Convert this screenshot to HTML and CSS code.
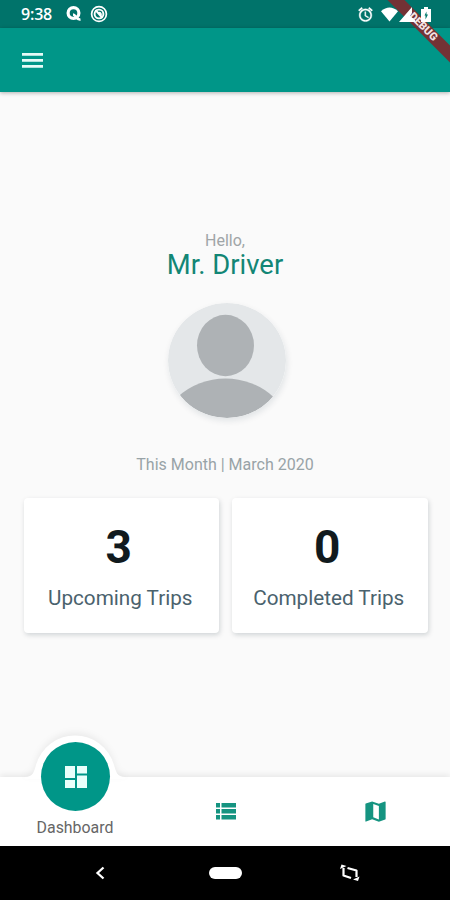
FILE: index.html
```html
<!DOCTYPE html>
<html lang="en">
<head>
<meta charset="UTF-8">
<meta name="viewport" content="width=device-width, initial-scale=1.0">
<title>Driver Dashboard</title>
<link rel="stylesheet" href="styles.css">
</head>
<body>

<div class="phone">
    <div class="status-bar">
        <span class="time">9:38</span>
        <svg class="q-icon" width="18" height="18" viewBox="0 0 18 18" fill="none" stroke="#fff">
            <circle cx="8.500" cy="8" r="5.400" stroke-width="3.200"/>
            <path d="M8 9.500c3 0 3 5.700 7.500 5" stroke-width="2.600"/>
        </svg>
        <svg class="chat-icon" width="18" height="18" viewBox="0 0 18 18" fill="none" stroke="#fff">
            <circle cx="9" cy="9" r="7.400" stroke-width="1.700"/>
            <circle cx="9" cy="9" r="4.400" stroke-width="1.900"/>
            <path d="M5.500 5l7 8M8 8.200c2-1 3 0 3 2" stroke-width="1.900"/>
        </svg>
        <div class="status-right">
            <svg width="17" height="17" viewBox="0 0 24 24" fill="#fff" stroke="#fff" stroke-width=".5">
                <path d="M22 5.720l-4.600-3.860-1.290 1.530 4.600 3.860L22 5.720zM7.880 3.390L6.600 1.860 2 5.710l1.290 1.530 4.590-3.850zM12.500 8H11v6l4.750 2.850.75-1.230-4-2.370V8zM12 4c-4.970 0-9 4.030-9 9s4.020 9 9 9c4.970 0 9-4.030 9-9s-4.030-9-9-9zm0 16c-3.870 0-7-3.130-7-7s3.130-7 7-7 7 3.130 7 7-3.130 7-7 7z"/>
            </svg>
            <svg width="17" height="15" viewBox="0 0 18 15" fill="#fff">
                <path d="M0 4Q9-4 18 4L9 15z"/>
            </svg>
            <svg width="16" height="15" viewBox="0 0 16 15" fill="#fff">
                <path d="M0 15L13 0v6l-2 3 5 4v2z"/>
            </svg>
            <svg width="10" height="15" viewBox="0 0 10 15">
                <path d="M3 0h4v2h3v13H0V2h3z" fill="#fff"/>
                <path d="M5.500 4.500L3.500 8.500h1v4l2.500-5H5.500z" fill="#00796b"/>
            </svg>
        </div>
    </div>

    <header class="app-bar">
        <svg width="21" height="15" viewBox="0 0 21 15" fill="#e6fbf7">
            <path d="M0 0h21v2.700H0zM0 6h21v2.700H0zM0 12h21v2.700H0z"/>
        </svg>
    </header>

    <div class="debug"><span>DEBUG</span></div>

    <main>
        <p class="hello">Hello,</p>
        <h1>Mr. Driver</h1>
        <svg class="avatar" width="118" height="115" viewBox="0 0 118 115">
            <clipPath id="round"><ellipse cx="59" cy="57.500" rx="59" ry="57.500"/></clipPath>
            <g clip-path="url(#round)">
                <rect width="118" height="115" fill="#e4e7e9"/>
                <ellipse cx="57.500" cy="42.500" rx="28.500" ry="30.700" fill="#aeb2b5"/>
                <ellipse cx="57.500" cy="137" rx="67" ry="61.500" fill="#aeb2b5"/>
            </g>
        </svg>
        <p class="month">This Month | March 2020</p>
        <div class="cards">
            <div class="card">
                <div class="count">3</div>
                <div class="label">Upcoming Trips</div>
            </div>
            <div class="card">
                <div class="count">0</div>
                <div class="label">Completed Trips</div>
            </div>
        </div>
    </main>

    <nav class="tabs">
        <div class="tab active">
            <svg class="bump" width="100" height="44" viewBox="0 0 100 44">
                <path d="M0 44V42C8 42 9 37 11 30A40.500 40.500 0 0 1 89 30C91 37 92 42 100 42V44z" fill="#fff"/>
            </svg>
            <div class="circle">
                <svg width="22" height="22" viewBox="0 0 22 22" fill="#e9fffb">
                    <path d="M0 0h10v12H0zM12 0h10v7.500H12zM0 14h10v8H0zM12 9.500h10V22H12z"/>
                </svg>
            </div>
            <span>Dashboard</span>
        </div>
        <div class="tab">
            <svg class="list-icon" width="20" height="17" viewBox="0 0 20 17" fill="#159481">
                <path d="M0 0h4v4.500H0zM5.500 0H20v4.500H5.500zM0 6h4v4.500H0zM5.500 6H20v4.500H5.500zM0 12h4v4.500H0zM5.500 12H20v4.500H5.500z"/>
            </svg>
        </div>
        <div class="tab">
            <svg class="map-icon" width="27" height="27" viewBox="0 0 24 24" fill="#159481">
                <path d="M20.500 3l-.16.030L15 5.100 9 3 3.360 4.900c-.21.070-.36.250-.36.480V20.500c0 .28.220.5.5.5l.16-.030L9 18.900l6 2.100 5.640-1.900c.21-.070.36-.25.360-.480V3.500c0-.28-.22-.5-.5-.5zM15 19l-5-1.800V5.300l5 1.800V19z"/>
            </svg>
        </div>
    </nav>

    <div class="system-nav">
        <svg width="10" height="14" viewBox="0 0 10 14" fill="none" stroke="#fff" stroke-width="2.300">
            <path d="M8.500 1.500L2.500 7l6 5.500"/>
        </svg>
        <div class="home"></div>
        <svg class="rotate-icon" width="20" height="18" viewBox="0 0 20 18" fill="none" stroke="#fff" stroke-width="2.200" stroke-linejoin="round">
            <path d="M3.500 4v7.500L11 14M7.500 4l9 2.500V13"/>
            <path d="M0 5l1.500-4.500L6.500 2zM19.500 12.500L18 17l-5-1.500z" fill="#fff" stroke="none"/>
        </svg>
    </div>
</div>

</body>
</html>
```
FILE: styles.css
```css
body {
    margin: 0;
    font-family: Roboto, "Liberation Sans", sans-serif;
    background-color: #fafafa;
}

h1, p {
    margin: 0;
    font-weight: 400;
}

svg {
    display: block;
    flex-shrink: 0;
}

.phone {
    position: relative;
    display: flex;
    flex-direction: column;
    width: 450px;
    height: 900px;
    overflow: hidden;
}

.status-bar {
    display: flex;
    align-items: center;
    height: 28px;
    box-sizing: border-box;
    padding: 0 19px 0 21px;
    background-color: #00736a;
    color: #fff;
}

.time {
    width: 44px;
    font-family: "Open Sans", sans-serif;
    font-size: 16px;
    font-weight: 600;
    letter-spacing: -0.2px;
}

.chat-icon {
    margin-left: 7px;
}

.status-right {
    position: relative;
    z-index: 3;
    display: flex;
    align-items: center;
    margin-left: auto;
}

.status-right svg + svg {
    margin-left: 7px;
}

.status-right svg:nth-child(3) {
    margin-left: 1px;
}

.status-right svg:nth-child(4) {
    margin-left: 6px;
}

.app-bar {
    display: flex;
    align-items: center;
    height: 64px;
    padding-left: 22px;
    background-color: #009688;
    box-shadow: 0 1px 4px rgba(0,0,0,0.3);
}

.debug {
    position: absolute;
    top: 21px;
    left: 363px;
    width: 120px;
    height: 12px;
    background-color: #733235;
    color: #f4e4e4;
    font-size: 11px;
    font-weight: 900;
    line-height: 12px;
    text-align: center;
    transform: rotate(45deg);
    z-index: 2;
}

main {
    flex: 1;
    display: flex;
    flex-direction: column;
    align-items: center;
    padding-top: 139px;
}

.hello {
    color: #a0a5a7;
    font-size: 16px;
    line-height: 20px;
}

h1 {
    color: #128675;
    font-size: 27.4px;
    line-height: 29px;
}

.avatar {
    margin: 23px 0 0 4px;
    border-radius: 50%;
    box-shadow: 1px 3px 6px rgba(0,40,60,0.1);
}

.month {
    margin-top: 37px;
    color: #98a3a7;
    font-size: 16px;
    line-height: 20px;
}

.cards {
    display: flex;
    gap: 13px;
    width: 404px;
    margin: 23px 0 0 1px;
}

.card {
    flex: 1;
    height: 135px;
    background-color: #fff;
    border-radius: 4px;
    box-shadow: 1px 2px 5px rgba(0,30,40,0.17);
    text-align: center;
}

.count {
    margin-top: 22px;
    padding-right: 5px;
    color: #111a1e;
    font-size: 46px;
    font-weight: 700;
    line-height: 54px;
}

.label {
    margin-top: 12px;
    padding-right: 2px;
    color: #4a626d;
    font-size: 20.7px;
    line-height: 25px;
}

.tabs {
    position: relative;
    display: flex;
    height: 69px;
    background-color: #fff;
    box-shadow: 0 -2px 6px rgba(0,0,0,0.08);
}

.tab {
    position: relative;
    flex: 1;
    display: flex;
    align-items: center;
    justify-content: center;
}

.active {
    align-items: flex-end;
    color: #666;
    font-size: 15.9px;
    line-height: 18px;
}

.active span {
    margin-bottom: 9px;
}

.list-icon {
    margin-left: 2px;
}

.map-icon {
    margin-left: 1px;
}

.bump {
    position: absolute;
    left: 25px;
    top: -42px;
    filter: drop-shadow(0 -3px 3px rgba(0,0,0,0.06));
}

.circle {
    position: absolute;
    left: 41px;
    top: -35px;
    display: flex;
    align-items: center;
    justify-content: center;
    width: 69px;
    height: 69px;
    border-radius: 50%;
    background-color: #009688;
}

.system-nav {
    display: flex;
    align-items: center;
    height: 54px;
    padding-left: 95px;
    background-color: #000;
}

.home {
    width: 33px;
    height: 12px;
    margin: 0 98px 0 104px;
    border-radius: 6px;
    background-color: #fff;
}
```
